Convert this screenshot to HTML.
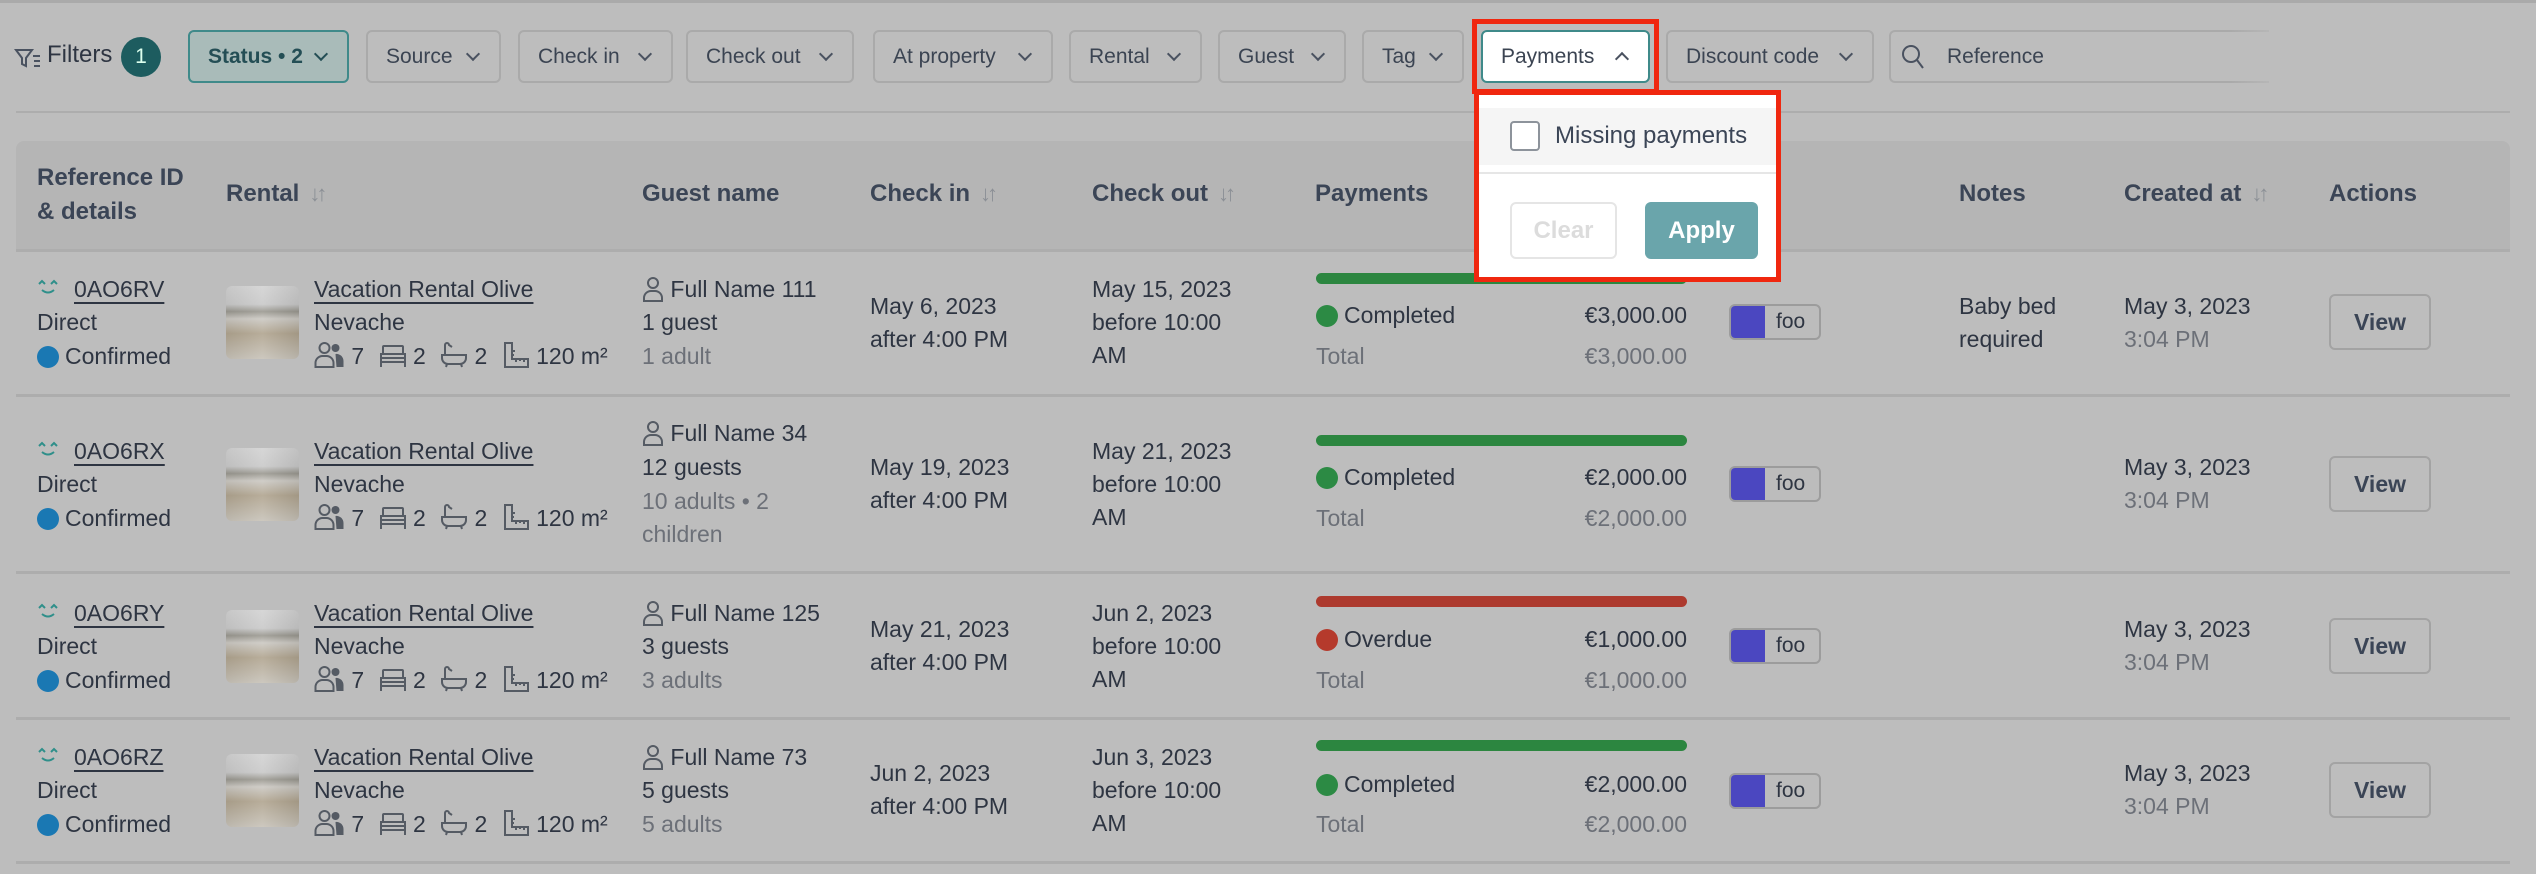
<!DOCTYPE html>
<html><head><meta charset="utf-8"><style>
*{box-sizing:border-box;margin:0;padding:0}
body{width:2536px;height:874px;overflow:hidden;background:#bdbdbd;font-family:"Liberation Sans",sans-serif;color:#2e3542;position:relative}
.a{position:absolute;white-space:nowrap}
.t{position:absolute;white-space:nowrap;font-size:23px;line-height:33px}
.g{color:#6c7078}
.btn{position:absolute;top:30px;height:53px;border:2px solid #aaa;border-radius:6px;font-size:21px;line-height:49px;padding-left:18px;color:#3b4452}
.chev{position:absolute;top:17px;width:10px;height:10px;border-right:2px solid #4a5260;border-bottom:2px solid #4a5260;transform:rotate(45deg)}
.h{position:absolute;font-size:24px;font-weight:bold;color:#3b4556;line-height:34px;white-space:nowrap}
.sort{color:#8c9096;font-weight:normal;font-size:22px;margin-left:10px;letter-spacing:-4px}
.sep{position:absolute;left:16px;width:2494px;height:3px;background:#adadad}
.u{text-decoration:underline;text-underline-offset:5px;text-decoration-thickness:2px}
.thumb{position:absolute;left:226px;width:73px;height:73px;border-radius:6px;background:linear-gradient(90deg,rgba(0,0,0,.05),rgba(255,255,255,.1),rgba(0,0,0,.08)),linear-gradient(180deg,#d2d2d2 0%,#c9c9c9 25%,#9a9890 35%,#cbc8c2 45%,#b0a48f 65%,#c7c2b8 100%)}
.bar{position:absolute;left:1316px;width:371px;height:11px;border-radius:6px}
.dot{display:inline-block;width:22px;height:22px;border-radius:50%;vertical-align:-4px;margin-right:6px}
.tag{position:absolute;left:1729px;width:92px;height:36px;border:2px solid #9c9c9c;border-radius:6px;background:#bcbcbc;overflow:hidden;font-size:21px;line-height:32px}
.tag i{position:absolute;left:0;top:0;width:34px;height:100%;background:#4b47c0}
.tag span{position:absolute;left:45px}
.view{position:absolute;left:2329px;width:102px;height:56px;border:2px solid #a3a3a3;border-radius:6px;text-align:center;line-height:52px;font-size:23px;font-weight:bold;color:#3b4556}
.amt{position:absolute;right:849px;text-align:right}
.ic{display:inline-block;vertical-align:-5px}
</style></head><body>
<svg width="0" height="0" style="position:absolute">
<symbol id="ppl" viewBox="0 0 30 28"><circle cx="10" cy="7" r="5" fill="none" stroke="#555b64" stroke-width="2"/><path d="M1 26v-4a7 7 0 0 1 7-7h4a7 7 0 0 1 7 7v4z" fill="none" stroke="#555b64" stroke-width="2"/><circle cx="21" cy="7" r="4" fill="#555b64"/><path d="M21 13a7 7 0 0 1 8 7v6h-7" fill="#555b64"/></symbol>
<symbol id="bed" viewBox="0 0 28 26"><rect x="4" y="3" width="20" height="8" rx="1" fill="none" stroke="#555b64" stroke-width="2"/><path d="M2 11h24v8H2zM2 19v5M26 19v5M2 15h24" fill="none" stroke="#555b64" stroke-width="2"/></symbol>
<symbol id="bath" viewBox="0 0 28 28"><path d="M5 14V4a2 2 0 0 1 4 0l3 2M2 14h24v3a6 6 0 0 1-6 6H8a6 6 0 0 1-6-6zM7 23l-1 3M21 23l1 3" fill="none" stroke="#555b64" stroke-width="2"/></symbol>
<symbol id="area" viewBox="0 0 28 28"><path d="M3 2h7v16h16v8H3zM10 10h3M10 14h2M14 18v3M18 18v2M22 18v3" fill="none" stroke="#555b64" stroke-width="2"/></symbol>
<symbol id="usr" viewBox="0 0 22 26"><circle cx="11" cy="7" r="5" fill="none" stroke="#555b64" stroke-width="2"/><path d="M2 25v-3a7 7 0 0 1 7-7h4a7 7 0 0 1 7 7v3z" fill="none" stroke="#555b64" stroke-width="2"/></symbol>
<symbol id="sm" viewBox="0 0 22 18"><path d="M2 6l3-3 3 3M14 6l3-3 3 3M5 12q6 5 12 0" fill="none" stroke="#2f8f8a" stroke-width="2"/></symbol>
</svg>
<div class="a" style="left:0;top:0;width:2536px;height:3px;background:#aaa"></div>

<!-- filter bar -->
<svg class="a" style="left:14px;top:47px" width="28" height="22" viewBox="0 0 28 22"><path d="M2 3h16l-6 8v8l-4-2v-6z" fill="none" stroke="#4a5260" stroke-width="2"/><path d="M19 9h7M20 14h6M20 19h6" stroke="#4a5260" stroke-width="2"/></svg>
<div class="a" style="left:47px;top:41px;font-size:24px;color:#2e3542">Filters</div>
<div class="a" style="left:121px;top:37px;width:40px;height:40px;border-radius:50%;background:#1d5c5f;color:#dfe;text-align:center;line-height:40px;font-size:21px">1</div>

<div class="btn" style="left:188px;width:161px;border-color:#3f8a8a;background:#a9bbb9;color:#244e55;font-weight:bold">Status • 2<span class="chev" style="left:126px;border-color:#244e55"></span></div>
<div class="btn" style="left:366px;width:135px">Source<span class="chev" style="left:100px"></span></div>
<div class="btn" style="left:518px;width:155px">Check in<span class="chev" style="left:120px"></span></div>
<div class="btn" style="left:686px;width:168px">Check out<span class="chev" style="left:133px"></span></div>
<div class="btn" style="left:873px;width:180px">At property<span class="chev" style="left:145px"></span></div>
<div class="btn" style="left:1069px;width:133px">Rental<span class="chev" style="left:98px"></span></div>
<div class="btn" style="left:1218px;width:128px">Guest<span class="chev" style="left:93px"></span></div>
<div class="btn" style="left:1362px;width:102px">Tag<span class="chev" style="left:67px"></span></div>
<div class="btn" style="left:1481px;width:169px;border-color:#3f8a8a;background:#fff;color:#3b4452">Payments<span class="chev" style="left:134px;top:22px;transform:rotate(225deg)"></span></div>
<div class="btn" style="left:1666px;width:208px">Discount code<span class="chev" style="left:173px"></span></div>
<div class="btn" style="left:1889px;width:380px;border-right:none;border-radius:6px 0 0 6px;padding-left:56px">Reference</div>
<svg class="a" style="left:1900px;top:43px" width="26" height="28" viewBox="0 0 26 28"><circle cx="11" cy="11" r="8" fill="none" stroke="#4a5260" stroke-width="2"/><path d="M17 17l6 8" stroke="#4a5260" stroke-width="2"/></svg>
<div class="a" style="left:2230px;top:28px;width:60px;height:58px;background:linear-gradient(90deg,rgba(189,189,189,0),#bdbdbd)"></div>

<div class="sep" style="top:111px;height:2px"></div>

<!-- header -->
<div class="a" style="left:16px;top:141px;width:2494px;height:110px;background:#b5b5b5;border-radius:8px 8px 0 0"></div>
<div class="sep" style="top:249px"></div>
<div class="h" style="left:37px;top:161px">Reference ID<br>&amp; details</div>
<div class="h" style="left:226px;top:177px">Rental<span class="sort">↓↑</span></div>
<div class="h" style="left:642px;top:177px">Guest name</div>
<div class="h" style="left:870px;top:177px">Check in<span class="sort">↓↑</span></div>
<div class="h" style="left:1092px;top:177px">Check out<span class="sort">↓↑</span></div>
<div class="h" style="left:1315px;top:177px">Payments</div>
<div class="h" style="left:1959px;top:177px">Notes</div>
<div class="h" style="left:2124px;top:177px">Created at<span class="sort">↓↑</span></div>
<div class="h" style="left:2329px;top:177px">Actions</div>

<div class="sep" style="top:394px"></div>
<div class="sep" style="top:571px"></div>
<div class="sep" style="top:717px"></div>
<div class="sep" style="top:861px"></div>

<!-- ROW 1 -->
<svg class="a" style="left:37px;top:278px" width="22" height="18"><use href="#sm"/></svg>
<div class="t u" style="left:74px;top:273px">0AO6RV</div>
<div class="t" style="left:37px;top:306px">Direct</div>
<div class="t" style="left:37px;top:340px"><span class="dot" style="background:#1a78b3"></span>Confirmed</div>
<div class="thumb" style="top:286px"></div>
<div class="t u" style="left:314px;top:273px">Vacation Rental Olive</div>
<div class="t" style="left:314px;top:306px">Nevache</div>
<div class="t" style="left:314px;top:340px"><svg class="ic" width="31" height="28"><use href="#ppl"/></svg> 7 <svg class="ic" width="28" height="26" style="margin-left:8px"><use href="#bed"/></svg> 2 <svg class="ic" width="28" height="28" style="margin-left:8px"><use href="#bath"/></svg> 2 <svg class="ic" width="28" height="28" style="margin-left:8px"><use href="#area"/></svg> 120 m²</div>
<div class="t" style="left:642px;top:273px"><svg class="ic" width="22" height="26"><use href="#usr"/></svg> Full Name 111</div>
<div class="t" style="left:642px;top:306px">1 guest</div>
<div class="t g" style="left:642px;top:340px">1 adult</div>
<div class="t" style="left:870px;top:290px">May 6, 2023<br>after 4:00 PM</div>
<div class="t" style="left:1092px;top:273px">May 15, 2023<br>before 10:00<br>AM</div>
<div class="bar" style="top:273px;background:#2c8640"></div>
<div class="t" style="left:1316px;top:299px"><span class="dot" style="background:#2c8a44"></span>Completed</div>
<div class="t amt" style="top:299px">€3,000.00</div>
<div class="t g" style="left:1316px;top:340px">Total</div>
<div class="t g amt" style="top:340px">€3,000.00</div>
<div class="tag" style="top:304px"><i></i><span>foo</span></div>
<div class="t" style="left:1959px;top:290px">Baby bed<br>required</div>
<div class="t" style="left:2124px;top:290px">May 3, 2023<br><span class="g">3:04 PM</span></div>
<div class="view" style="top:294px">View</div>

<!-- ROW 2 -->
<svg class="a" style="left:37px;top:440px" width="22" height="18"><use href="#sm"/></svg>
<div class="t u" style="left:74px;top:435px">0AO6RX</div>
<div class="t" style="left:37px;top:468px">Direct</div>
<div class="t" style="left:37px;top:502px"><span class="dot" style="background:#1a78b3"></span>Confirmed</div>
<div class="thumb" style="top:448px"></div>
<div class="t u" style="left:314px;top:435px">Vacation Rental Olive</div>
<div class="t" style="left:314px;top:468px">Nevache</div>
<div class="t" style="left:314px;top:502px"><svg class="ic" width="31" height="28"><use href="#ppl"/></svg> 7 <svg class="ic" width="28" height="26" style="margin-left:8px"><use href="#bed"/></svg> 2 <svg class="ic" width="28" height="28" style="margin-left:8px"><use href="#bath"/></svg> 2 <svg class="ic" width="28" height="28" style="margin-left:8px"><use href="#area"/></svg> 120 m²</div>
<div class="t" style="left:642px;top:417px"><svg class="ic" width="22" height="26"><use href="#usr"/></svg> Full Name 34</div>
<div class="t" style="left:642px;top:451px">12 guests</div>
<div class="t g" style="left:642px;top:485px">10 adults • 2<br>children</div>
<div class="t" style="left:870px;top:451px">May 19, 2023<br>after 4:00 PM</div>
<div class="t" style="left:1092px;top:435px">May 21, 2023<br>before 10:00<br>AM</div>
<div class="bar" style="top:435px;background:#2c8640"></div>
<div class="t" style="left:1316px;top:461px"><span class="dot" style="background:#2c8a44"></span>Completed</div>
<div class="t amt" style="top:461px">€2,000.00</div>
<div class="t g" style="left:1316px;top:502px">Total</div>
<div class="t g amt" style="top:502px">€2,000.00</div>
<div class="tag" style="top:466px"><i></i><span>foo</span></div>
<div class="t" style="left:2124px;top:451px">May 3, 2023<br><span class="g">3:04 PM</span></div>
<div class="view" style="top:456px">View</div>

<!-- ROW 3 -->
<svg class="a" style="left:37px;top:602px" width="22" height="18"><use href="#sm"/></svg>
<div class="t u" style="left:74px;top:597px">0AO6RY</div>
<div class="t" style="left:37px;top:630px">Direct</div>
<div class="t" style="left:37px;top:664px"><span class="dot" style="background:#1a78b3"></span>Confirmed</div>
<div class="thumb" style="top:610px"></div>
<div class="t u" style="left:314px;top:597px">Vacation Rental Olive</div>
<div class="t" style="left:314px;top:630px">Nevache</div>
<div class="t" style="left:314px;top:664px"><svg class="ic" width="31" height="28"><use href="#ppl"/></svg> 7 <svg class="ic" width="28" height="26" style="margin-left:8px"><use href="#bed"/></svg> 2 <svg class="ic" width="28" height="28" style="margin-left:8px"><use href="#bath"/></svg> 2 <svg class="ic" width="28" height="28" style="margin-left:8px"><use href="#area"/></svg> 120 m²</div>
<div class="t" style="left:642px;top:597px"><svg class="ic" width="22" height="26"><use href="#usr"/></svg> Full Name 125</div>
<div class="t" style="left:642px;top:630px">3 guests</div>
<div class="t g" style="left:642px;top:664px">3 adults</div>
<div class="t" style="left:870px;top:613px">May 21, 2023<br>after 4:00 PM</div>
<div class="t" style="left:1092px;top:597px">Jun 2, 2023<br>before 10:00<br>AM</div>
<div class="bar" style="top:596px;background:#ad3a2e"></div>
<div class="t" style="left:1316px;top:623px"><span class="dot" style="background:#b53a2c"></span>Overdue</div>
<div class="t amt" style="top:623px">€1,000.00</div>
<div class="t g" style="left:1316px;top:664px">Total</div>
<div class="t g amt" style="top:664px">€1,000.00</div>
<div class="tag" style="top:628px"><i></i><span>foo</span></div>
<div class="t" style="left:2124px;top:613px">May 3, 2023<br><span class="g">3:04 PM</span></div>
<div class="view" style="top:618px">View</div>

<!-- ROW 4 -->
<svg class="a" style="left:37px;top:746px" width="22" height="18"><use href="#sm"/></svg>
<div class="t u" style="left:74px;top:741px">0AO6RZ</div>
<div class="t" style="left:37px;top:774px">Direct</div>
<div class="t" style="left:37px;top:808px"><span class="dot" style="background:#1a78b3"></span>Confirmed</div>
<div class="thumb" style="top:754px"></div>
<div class="t u" style="left:314px;top:741px">Vacation Rental Olive</div>
<div class="t" style="left:314px;top:774px">Nevache</div>
<div class="t" style="left:314px;top:808px"><svg class="ic" width="31" height="28"><use href="#ppl"/></svg> 7 <svg class="ic" width="28" height="26" style="margin-left:8px"><use href="#bed"/></svg> 2 <svg class="ic" width="28" height="28" style="margin-left:8px"><use href="#bath"/></svg> 2 <svg class="ic" width="28" height="28" style="margin-left:8px"><use href="#area"/></svg> 120 m²</div>
<div class="t" style="left:642px;top:741px"><svg class="ic" width="22" height="26"><use href="#usr"/></svg> Full Name 73</div>
<div class="t" style="left:642px;top:774px">5 guests</div>
<div class="t g" style="left:642px;top:808px">5 adults</div>
<div class="t" style="left:870px;top:757px">Jun 2, 2023<br>after 4:00 PM</div>
<div class="t" style="left:1092px;top:741px">Jun 3, 2023<br>before 10:00<br>AM</div>
<div class="bar" style="top:740px;background:#2c8640"></div>
<div class="t" style="left:1316px;top:768px"><span class="dot" style="background:#2c8a44"></span>Completed</div>
<div class="t amt" style="top:768px">€2,000.00</div>
<div class="t g" style="left:1316px;top:808px">Total</div>
<div class="t g amt" style="top:808px">€2,000.00</div>
<div class="tag" style="top:773px"><i></i><span>foo</span></div>
<div class="t" style="left:2124px;top:757px">May 3, 2023<br><span class="g">3:04 PM</span></div>
<div class="view" style="top:762px">View</div>

<!-- dropdown -->
<div class="a" style="left:1478px;top:95px;width:300px;height:185px;background:#fff"></div>
<div class="a" style="left:1478px;top:108px;width:300px;height:57px;background:#f5f5f5"></div>
<div class="a" style="left:1478px;top:172px;width:300px;height:2px;background:#e6e6e6"></div>
<div class="a" style="left:1510px;top:121px;width:30px;height:30px;border:2px solid #8d939b;border-radius:4px;background:#fff"></div>
<div class="a" style="left:1555px;top:120px;font-size:24px;line-height:32px;color:#3b4556">Missing payments</div>
<div class="a" style="left:1510px;top:202px;width:107px;height:57px;border:2px solid #e5e5e5;border-radius:6px;text-align:center;line-height:53px;font-size:24px;font-weight:bold;color:#dcdcdc">Clear</div>
<div class="a" style="left:1645px;top:202px;width:113px;height:57px;border-radius:6px;background:#6aa5ab;text-align:center;line-height:57px;font-size:24px;font-weight:bold;color:#fff">Apply</div>

<!-- red highlight boxes -->
<div class="a" style="left:1472px;top:19px;width:187px;height:75px;border:5px solid #f0270f"></div>
<div class="a" style="left:1474px;top:90px;width:307px;height:192px;border:5px solid #f0270f"></div>
</body></html>
